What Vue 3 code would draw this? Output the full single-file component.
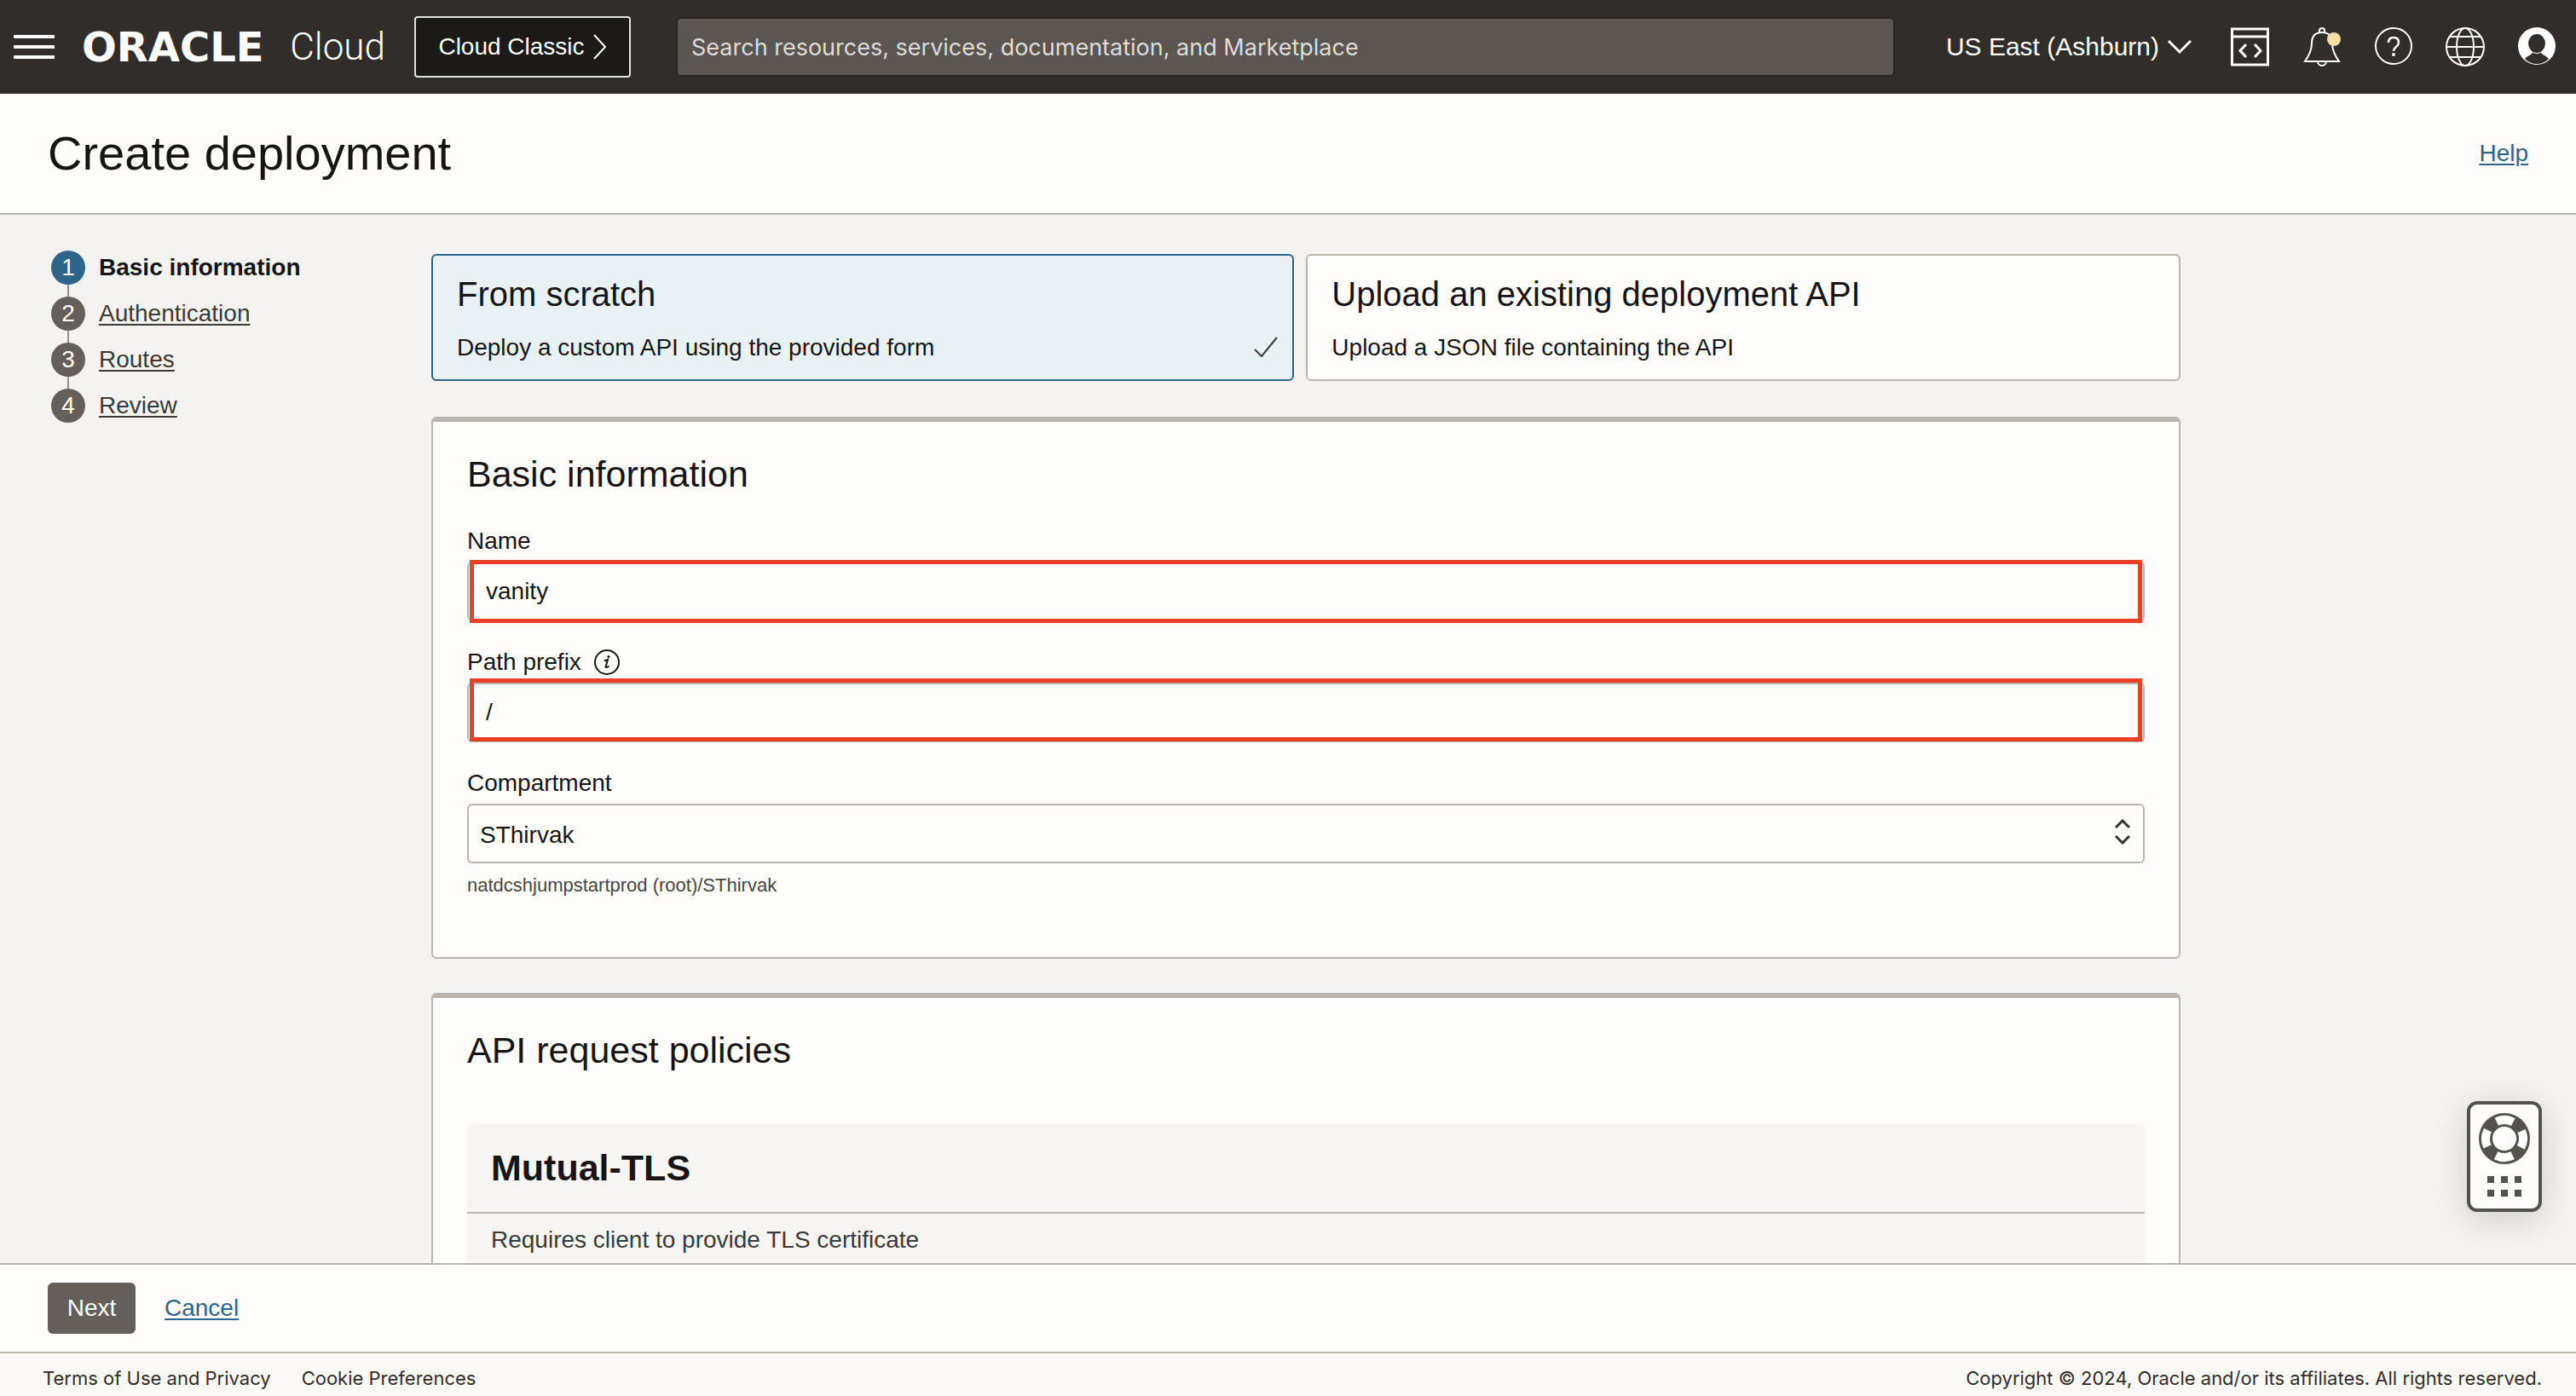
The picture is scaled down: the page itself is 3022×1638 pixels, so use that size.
<script setup>
import { ref } from 'vue'

const steps = ['Basic information', 'Authentication', 'Routes', 'Review']
const current = ref(0)
const name = ref('vanity')
const prefix = ref('/')
const compartment = ref('SThirvak')
const search = ref('')
</script>

<template>
  <div class="page">
    <header class="topbar">
      <button class="icon-btn menu" aria-label="Navigation menu">
        <svg width="48" height="28" viewBox="0 0 48 28" fill="#fff">
          <rect width="48" height="4" rx="1" /><rect y="12" width="48" height="4" rx="1" /><rect y="24" width="48" height="4" rx="1" />
        </svg>
      </button>
      <a href="#" class="brand"><span class="brand-name">ORACLE</span><span class="brand-cloud">Cloud</span></a>
      <button class="classic">
        Cloud Classic
        <svg width="16" height="30" viewBox="0 0 16 30" fill="none" stroke="#fff" stroke-width="2"><path d="M1 1 14 15 1 29" /></svg>
      </button>
      <input v-model="search" class="search" type="search" aria-label="Search" placeholder="Search resources, services, documentation, and Marketplace" />
      <button class="region">
        US East (Ashburn)
        <svg width="28" height="18" viewBox="0 0 28 18" fill="none" stroke="#fff" stroke-width="3"><path d="M1 2 14 15 27 2" /></svg>
      </button>
      <div class="tools">
        <button class="icon-btn" aria-label="Developer tools">
          <svg width="46" height="46" viewBox="0 0 46 46" fill="none" stroke="#fff" stroke-width="3">
            <rect x="1.500" y="2" width="42" height="42" /><path d="M2 11H44M18 20 11 27.500 18 35M28 20 35 27.500 28 35" />
          </svg>
        </button>
        <button class="icon-btn" aria-label="Announcements">
          <svg width="46" height="46" viewBox="0 0 46 46" fill="none" stroke="#fff" stroke-width="2">
            <path d="M3 40C8 33 11 27 11 19C11 10 15 6 23 6S35 10 35 19C35 27 38 33 43 40Z" />
            <path d="M20 6V4A3 3 0 0 1 26 4V6M18 40A5 5 0 0 0 28 40" />
            <circle cx="37" cy="14" r="8" fill="#f5dfa5" stroke="none" />
          </svg>
        </button>
        <button class="icon-btn" aria-label="Help">
          <svg width="46" height="46" viewBox="0 0 46 46" fill="none" stroke="#fff" stroke-width="2">
            <circle cx="23" cy="22" r="21" />
            <path d="M17 18C17 14 19.500 12 23 12S29 14 29 18C29 23 23 23 23 28" stroke-width="2.500" />
            <circle cx="23" cy="32" r="2" fill="#fff" stroke="none" />
          </svg>
        </button>
        <button class="icon-btn" aria-label="Language">
          <svg width="46" height="46" viewBox="0 0 46 46" fill="none" stroke="#fff" stroke-width="2">
            <circle cx="23" cy="23" r="22" /><ellipse cx="23" cy="23" rx="10" ry="22" />
            <path d="M1 23H45M5 11H41M5 35H41" />
          </svg>
        </button>
        <button class="icon-btn" aria-label="Profile">
          <svg width="46" height="46" viewBox="0 0 46 46">
            <circle cx="23" cy="22" r="22" fill="#fff" />
            <ellipse cx="23" cy="19" rx="10" ry="11" fill="#312d2a" />
            <path d="M9 37C12 33 17 33 18 29.500Q23 32.500 28 29.500C29 33 34 33 37 37C29 45 17 45 9 37Z" fill="#312d2a" />
          </svg>
        </button>
      </div>
    </header>

    <div class="titlebar">
      <h1>Create deployment</h1>
      <a href="#" class="link">Help</a>
    </div>

    <div class="body">
      <nav class="steps" aria-label="Steps">
        <ol>
          <li v-for="(step, i) in steps" :key="step" :class="{ active: i === current }">
            <span class="num">{{ i + 1 }}</span>
            <strong v-if="i === current">{{ step }}</strong>
            <a v-else href="#" @click.prevent="current = i">{{ step }}</a>
          </li>
        </ol>
      </nav>

      <main>
        <div class="choices">
          <button class="choice selected" aria-pressed="true">
            <span class="choice-title">From scratch</span>
            <span class="choice-line">Deploy a custom API using the provided form
              <svg width="28" height="26" viewBox="0 0 28 26" fill="none" stroke="#3b3a38" stroke-width="2"><path d="M1 15 9 23 27 1" /></svg>
            </span>
          </button>
          <button class="choice" aria-pressed="false">
            <span class="choice-title">Upload an existing deployment API</span>
            <span class="choice-line">Upload a JSON file containing the API</span>
          </button>
        </div>

        <section class="panel basic">
          <h2>Basic information</h2>
          <div class="field">
            <label for="name">Name</label>
            <div class="control marked"><input id="name" v-model="name" type="text" /></div>
          </div>
          <div class="field">
            <div class="label-row">
              <label for="prefix">Path prefix</label>
              <svg width="32" height="32" viewBox="0 0 32 32" fill="none" stroke="#161513" stroke-width="2">
                <circle cx="16" cy="16" r="14" />
                <path d="M13 14.500 17 13 14.500 21.500Q15 23 18.500 20.500" />
                <circle cx="18" cy="9.500" r="1.500" fill="#161513" stroke="none" />
              </svg>
            </div>
            <div class="control marked raised"><input id="prefix" v-model="prefix" type="text" /></div>
          </div>
          <div class="field">
            <label for="compartment">Compartment</label>
            <div class="control">
              <select id="compartment" v-model="compartment"><option>SThirvak</option></select>
              <svg class="arrows" width="18" height="30" viewBox="0 0 18 30" fill="none" stroke="#333" stroke-width="3"><path d="M1 10 9 2 17 10M1 20 9 28 17 20" /></svg>
            </div>
            <p class="hint">natdcshjumpstartprod (root)/SThirvak</p>
          </div>
        </section>

        <section class="panel">
          <h2>API request policies</h2>
          <div class="policy">
            <h3>Mutual-TLS</h3>
            <p>Requires client to provide TLS certificate</p>
          </div>
        </section>
      </main>
    </div>

    <div class="actions">
      <button class="next">Next</button>
      <a href="#" class="link">Cancel</a>
    </div>
    <footer>
      <a href="#">Terms of Use and Privacy</a>
      <a href="#">Cookie Preferences</a>
      <span class="copyright">Copyright © 2024, Oracle and/or its affiliates. All rights reserved.</span>
    </footer>

    <button class="support" aria-label="Support">
      <svg width="60" height="98" viewBox="0 0 60 98" fill="#54524d">
        <circle cx="30" cy="30" r="22" fill="none" stroke="#54524d" stroke-width="16" />
        <circle cx="30" cy="30" r="22" fill="none" stroke="#fff" stroke-width="10" stroke-dasharray="20 14.558" stroke-dashoffset="-7.279" transform="rotate(45 30 30)" />
        <path d="M10 74h8v8h-8zM26 74h8v8h-8zM42 74h8v8h-8zM10 90h8v8h-8zM26 90h8v8h-8zM42 90h8v8h-8z" />
      </svg>
    </button>
  </div>
</template>

<style>
body {
  margin: 0;
}
</style>

<style scoped>
.page {
  display: flex;
  flex-direction: column;
  height: 100vh;
  overflow: hidden;
  background: #f5f3f2;
  color: #161513;
  font: 28px/36px "Liberation Sans", Arial, sans-serif;
}
.page * {
  box-sizing: border-box;
}
button,
input,
select {
  font: inherit;
  color: inherit;
}
button {
  padding: 0;
  border: 0;
  background: none;
}
svg {
  display: block;
  flex: none;
}
h1,
h2,
h3,
p,
ol {
  margin: 0;
  padding: 0;
  font-weight: 400;
}
.link {
  color: #2c6589;
  text-underline-offset: 3px;
  text-decoration-thickness: 2px;
}

.topbar {
  display: flex;
  flex: none;
  align-items: center;
  height: 110px;
  padding: 0 23px 0 16px;
  background: #312d2a;
  color: #fff;
}
.brand {
  display: flex;
  align-items: center;
  justify-content: space-between;
  width: 356px;
  margin: 0 34px 0 32px;
  color: #fff;
  text-decoration: none;
}
.brand-name {
  font: 700 48px/56px "DejaVu Sans", sans-serif;
}
.brand-cloud {
  font: 300 44px/56px Roboto, sans-serif;
}
.classic {
  display: flex;
  align-items: center;
  justify-content: center;
  gap: 10px;
  width: 254px;
  height: 72px;
  border: 2px solid #dfe4da;
  border-radius: 4px;
  background: #1b1a16;
}
.search {
  flex: 1;
  min-width: 0;
  height: 70px;
  margin: 0 60px 0 53px;
  padding: 0 16px;
  border: 2px solid #2a2623;
  border-radius: 6px;
  background: #5b5652;
  font-family: Inter, sans-serif;
  font-size: 27px;
}
.search::placeholder {
  color: #dedcda;
  opacity: 1;
}
.region {
  display: flex;
  align-items: center;
  gap: 10px;
  margin-right: 46px;
  font-size: 30px;
}
.tools {
  display: flex;
  gap: 38px;
}

.titlebar {
  display: flex;
  flex: none;
  align-items: center;
  justify-content: space-between;
  height: 142px;
  padding: 0 56px;
  border-bottom: 2px solid #bbb5b0;
  background: #fefdfb;
}
h1 {
  font-size: 56px;
  line-height: 64px;
}

.body {
  display: flex;
  flex: 1;
  min-height: 0;
  padding-right: 464px;
  overflow: auto;
  scrollbar-width: none;
}
.steps {
  flex: none;
  width: 506px;
  padding: 42px 0 0 60px;
}
ol {
  display: flex;
  flex-direction: column;
  gap: 14px;
  list-style: none;
}
li {
  position: relative;
  display: flex;
  align-items: center;
  gap: 16px;
  height: 40px;
}
li:not(:last-child)::after {
  position: absolute;
  top: 40px;
  left: 19px;
  width: 2px;
  height: 14px;
  background: #97928e;
  content: "";
}
li a {
  color: #3b3a38;
  text-underline-offset: 3px;
  text-decoration-thickness: 2px;
}
.num {
  width: 40px;
  border-radius: 50%;
  background: #655f5b;
  color: #fff;
  line-height: 40px;
  text-align: center;
}
.active .num {
  background: #2c6589;
}

main {
  flex: 1;
  min-width: 0;
  padding-top: 46px;
}
.choices {
  display: flex;
  gap: 14px;
}
.choice {
  display: flex;
  flex: 1026;
  flex-direction: column;
  gap: 19px;
  height: 149px;
  padding: 19px 17px 0 28px;
  border: 2px solid #bbb5b0;
  border-radius: 6px;
  background: #fefdfb;
  text-align: left;
}
.choice.selected {
  flex-grow: 1012;
  border-color: #2c6589;
  background: #e9f1f5;
}
.choice-title {
  font-size: 40px;
  line-height: 52px;
}
.choice-line {
  display: flex;
  align-items: center;
  justify-content: space-between;
}

.panel {
  margin-top: 42px;
  padding: 35px 40px 0;
  border: 2px solid #bbb5b0;
  border-top-width: 6px;
  border-radius: 6px;
  background: #fefdfb;
}
.panel + .panel {
  margin-top: 40px;
}
.basic {
  padding-bottom: 68px;
}
h2 {
  font-size: 43px;
  line-height: 52px;
}
.field {
  padding-top: 30px;
}
h2 + .field {
  padding-top: 35px;
}
.field > label,
.label-row {
  display: flex;
  align-items: center;
  gap: 14px;
  height: 36px;
  margin-bottom: 6px;
}
.control {
  position: relative;
}
.control input,
.control select {
  display: block;
  width: 100%;
  height: 70px;
  padding: 0 20px;
  border: 2px solid #bbb5b0;
  border-radius: 6px;
  background: #fefdfb;
  appearance: none;
}
.control select {
  padding: 4px 13px 0;
}
.marked::after {
  position: absolute;
  inset: -2px 3px;
  border: 5px solid #ec4026;
  content: "";
  pointer-events: none;
}
.raised::after {
  inset: -5px 3px 1px;
}
.arrows {
  position: absolute;
  top: 18px;
  right: 17px;
}
.hint {
  padding-top: 10px;
  color: #474543;
  font-size: 22px;
  line-height: 32px;
}
.policy {
  min-height: 260px;
  margin-top: 61px;
  border-radius: 6px;
  background: #f7f5f4;
}
h3 {
  padding: 26px 28px;
  border-bottom: 2px solid #bbb5b0;
  font-size: 43px;
  font-weight: 700;
  line-height: 51px;
}
.policy p {
  padding: 13px 28px;
  color: #3b3a38;
}

.actions {
  display: flex;
  flex: none;
  align-items: center;
  gap: 34px;
  height: 104px;
  padding: 0 56px;
  border-top: 2px solid #bbb5b0;
  background: #fefdfb;
}
.next {
  width: 103px;
  height: 60px;
  border-radius: 6px;
  background: #655f5b;
  color: #fff;
}
footer {
  display: flex;
  flex: none;
  align-items: center;
  gap: 36px;
  height: 52px;
  padding: 8px 40px 0 50px;
  border-top: 2px solid #bbb5b0;
  background: #faf9f8;
  color: #312d2a;
  font: 22px/28px Inter, sans-serif;
}
footer a {
  color: inherit;
  text-decoration: none;
}
.copyright {
  margin-left: auto;
}

.support {
  position: fixed;
  right: 40px;
  bottom: 216px;
  display: flex;
  align-items: flex-start;
  padding: 10px;
  width: 88px;
  height: 130px;
  border: 4px solid #54524d;
  border-radius: 12px;
  background: #fefdfb;
  box-shadow: 0 8px 40px rgba(0, 0, 0, 0.16);
}
</style>
